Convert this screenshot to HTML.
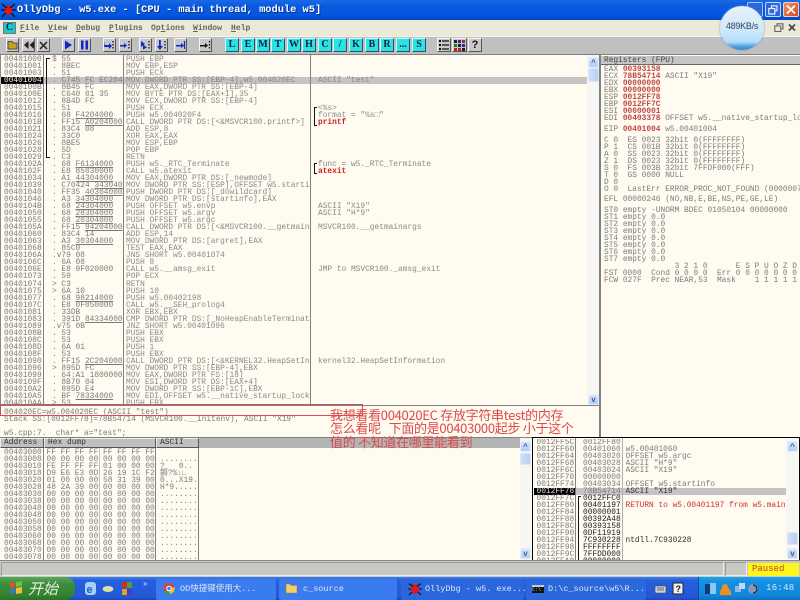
<!DOCTYPE html>
<html><head><meta charset="utf-8"><style>
*{margin:0;padding:0;box-sizing:border-box}
html,body{width:800px;height:600px;overflow:hidden;background:#fffbf0}
#w{position:absolute;left:0;top:0;width:800px;height:600px;overflow:hidden;filter:blur(.35px)}
.a{position:absolute}
pre{position:absolute;font-family:"Liberation Mono","Noto Sans CJK SC",monospace;font-size:7.85px;line-height:7.03px;color:#7c7c7c;white-space:pre;overflow-x:clip;overflow-y:visible}
.d{color:#8a8a8a}
.k{color:#555}
.r{color:#d03030}
.rb{color:#d02020;font-weight:bold}
.v{color:#c04848;font-weight:bold}
u{text-decoration:underline}
.tb{position:absolute;top:38px;height:14px;background:#c8c8c8;border:1px solid;border-color:#f4f4f4 #555 #555 #f4f4f4}
.cy{position:absolute;top:38px;width:14px;height:14px;background:#28e4e4;border:1px solid;border-color:#c8ffff #446 #446 #c8ffff;font:bold 10px/12px "Liberation Serif",serif;text-align:center;color:#124}
.sc{position:absolute;width:11px;height:11px;background:linear-gradient(#d8e6fa,#b4cdf2);border:1px solid #e4eefc;border-radius:2px;color:#3a5fa8;font:bold 8px/9px "Liberation Sans",sans-serif;text-align:center}
.th{position:absolute;width:11px;background:linear-gradient(90deg,#cfdff8,#b8d0f4);border:1px solid #dbe6f8;border-radius:2px}
.vl{position:absolute;width:1px;background:#808080}
.hd{position:absolute;top:438px;height:10px;background:#c0c0c0;border:1px solid;border-color:#eee #555 #555 #eee;font:7.85px/8px "Liberation Mono",monospace;color:#333;padding-left:3px;letter-spacing:.05px}
.m{position:absolute;top:24px;font:bold 8px/10px "Liberation Mono",monospace;color:#66665c;letter-spacing:.02px}
.tk{position:absolute;top:579px;height:21px;border-radius:2px;background:#3a7cf0;color:#dce6f4;font:8.5px/20px "Liberation Mono","Noto Sans CJK SC",monospace;padding-left:24px;white-space:pre}
</style></head><body><div id="w">

<!-- title bar -->
<div class="a" style="left:0;top:0;width:800px;height:20px;background:linear-gradient(#1c6ae4 0,#0a5ae0 30%,#0458e0 70%,#0348c4 100%)"></div>
<svg class="a" style="left:1px;top:2px" width="15" height="16" viewBox="0 0 15 16"><ellipse cx="7.5" cy="8" rx="4" ry="5" fill="#e01818"/><path d="M1 2l5 4M14 2l-5 4M0 8h4M15 8h-4M1 15l4-4M14 15l-4-4" stroke="#101010" stroke-width="1.2"/></svg>
<div class="a" style="left:17px;top:3px;font:bold 10.35px/14px 'Liberation Mono',monospace;color:#fff;white-space:pre;text-shadow:1px 1px 0 #03328f">OllyDbg - w5.exe - [CPU - main thread, module w5]</div>
<div class="a" style="left:747px;top:2px;width:16px;height:15px;background:#2a66dc;border:1px solid #a8c4f4;border-radius:2px"></div>
<div class="a" style="left:765px;top:2px;width:16px;height:15px;background:#2a66dc;border:1px solid #c4d8f8;border-radius:2px"></div>
<svg class="a" style="left:768px;top:5px" width="10" height="10"><path d="M3.5 3V.8h5.5v5H7M.8 3.5h6v5.5h-6z" fill="none" stroke="#e8f0ff" stroke-width="1.2"/></svg>
<div class="a" style="left:783px;top:2px;width:16px;height:15px;background:linear-gradient(135deg,#f09070,#d84818);border:1px solid #f0d0c0;border-radius:2px"></div>
<svg class="a" style="left:786px;top:5px" width="10" height="9"><path d="M1 .5l8 8M9 .5l-8 8" stroke="#fff" stroke-width="1.8"/></svg>

<!-- menu bar -->
<div class="a" style="left:0;top:20px;width:800px;height:16px;background:#ece9d8"></div>
<div class="a" style="left:3px;top:22px;width:13px;height:12px;background:#1cc8c8;border:1px solid #777;font:bold 10px/10px 'Liberation Serif',serif;text-align:center;color:#124">C</div>
<div class="m" style="left:20px"><u>F</u>ile</div>
<div class="m" style="left:48px"><u>V</u>iew</div>
<div class="m" style="left:76px"><u>D</u>ebug</div>
<div class="m" style="left:109px"><u>P</u>lugins</div>
<div class="m" style="left:151px">Op<u>t</u>ions</div>
<div class="m" style="left:193px"><u>W</u>indow</div>
<div class="m" style="left:231px"><u>H</u>elp</div>
<svg class="a" style="left:774px;top:23px" width="24" height="10"><path d="M3 2.5V.8h6v5H7.5M.8 3h6v5.5h-6z" fill="none" stroke="#666" stroke-width="1.1"/><path d="M15 1.5l6 6M21 1.5l-6 6" stroke="#444" stroke-width="1.6"/></svg>

<!-- toolbar -->
<div class="a" style="left:0;top:36px;width:800px;height:19px;background:#c0c0c0;border-top:1px solid #f2f2f2;border-bottom:1px solid #808080"></div>
<div class="tb" style="left:6px;width:13px"></div>
<svg class="a" style="left:7px;top:40px" width="12" height="10"><path d="M1 1.5h4l1 1.500h4v6H1z" fill="#c8a020" stroke="#333" stroke-width=".8"/></svg>
<div class="tb" style="left:22px;width:13px"></div>
<svg class="a" style="left:23px;top:40px" width="12" height="10"><path d="M5.5 1L1 5l4.500 4zM11 1L6.500 5 11 9z" fill="#222"/></svg>
<div class="tb" style="left:37px;width:13px"></div>
<svg class="a" style="left:39px;top:41px" width="9" height="9"><path d="M1 1l7 7M8 1l-7 7" stroke="#222" stroke-width="1.500"/></svg>
<div class="tb" style="left:62px;width:13px"></div>
<svg class="a" style="left:64px;top:40px" width="9" height="10"><path d="M1 .5L8 5 1 9.500z" fill="#1028c8"/></svg>
<div class="tb" style="left:78px;width:13px"></div>
<svg class="a" style="left:80px;top:40px" width="9" height="10"><path d="M1 .5h2.500v9H1zM5.500 .5H8v9H5.500z" fill="#1028c8"/></svg>
<div class="tb" style="left:103px;width:13px"></div>
<svg class="a" style="left:104px;top:40px" width="11" height="10"><path d="M1 1v4h4V3l3 3-3 3V7H0" fill="#1028c8"/><path d="M9 1v1.500M9 4v1.500M9 7v1.500" stroke="#111" stroke-width="1.300"/></svg>
<div class="tb" style="left:119px;width:13px"></div>
<svg class="a" style="left:120px;top:40px" width="11" height="10"><path d="M0 5h4V3l3 2.500L4 8V6.500H0z" fill="#1028c8"/><path d="M9 1v1.500M9 4v1.500M9 7v1.500" stroke="#111" stroke-width="1.300"/></svg>
<div class="tb" style="left:139px;width:13px"></div>
<svg class="a" style="left:140px;top:40px" width="11" height="10"><path d="M1 1l4 3-4 3zM3 4.500l4 3-4 2z" fill="#1028c8"/><path d="M9 1v1.500M9 4v1.500M9 7v1.500" stroke="#111" stroke-width="1.300"/></svg>
<div class="tb" style="left:155px;width:13px"></div>
<svg class="a" style="left:156px;top:40px" width="11" height="10"><path d="M3 0h1.800v6H7L3.900 10 1 6h2z" fill="#1028c8"/><path d="M9 1v1.500M9 4v1.500M9 7v1.500" stroke="#111" stroke-width="1.300"/></svg>
<div class="tb" style="left:174px;width:13px"></div>
<svg class="a" style="left:175px;top:40px" width="11" height="10"><path d="M1 5h5V3l3 2.500L6 8V6.500H1z" fill="#1028c8"/><path d="M9.500 1v8" stroke="#1028c8" stroke-width="1.300"/></svg>
<div class="tb" style="left:199px;width:13px"></div>
<svg class="a" style="left:200px;top:40px" width="11" height="10"><path d="M0 5h5V3l3 2.500L5 8V6.500H0z" fill="#111"/><path d="M9.500 1v1.500M9.500 4v1.500M9.500 7v1.500" stroke="#111" stroke-width="1.300"/></svg>

<div class="cy" style="left:225px">L</div><div class="cy" style="left:241px">E</div><div class="cy" style="left:256px">M</div><div class="cy" style="left:271px">T</div><div class="cy" style="left:287px">W</div><div class="cy" style="left:302px">H</div><div class="cy" style="left:318px">C</div><div class="cy" style="left:333px">/</div><div class="cy" style="left:349px">K</div><div class="cy" style="left:365px">B</div><div class="cy" style="left:380px">R</div><div class="cy" style="left:396px">...</div><div class="cy" style="left:412px">S</div>
<div class="tb" style="left:437px;width:14px"></div>
<svg class="a" style="left:438px;top:39px" width="12" height="12"><path d="M1 2h2M1 6h2M1 10h2" stroke="#111" stroke-width="2"/><path d="M4 2h7M4 6h7M4 10h7" stroke="#111" stroke-width="1.200"/></svg>
<div class="tb" style="left:452px;width:15px"></div>
<svg class="a" style="left:454px;top:40px" width="11" height="11"><rect width="3" height="3" fill="#222"/><rect x="4" width="3" height="3" fill="#2828c0"/><rect x="8" width="3" height="3" fill="#c02020"/><rect y="4" width="3" height="3" fill="#208020"/><rect x="4" y="4" width="3" height="3" fill="#222"/><rect x="8" y="4" width="3" height="3" fill="#2828c0"/><rect y="8" width="3" height="3" fill="#c02020"/><rect x="4" y="8" width="3" height="3" fill="#c02020"/><rect x="8" y="8" width="3" height="3" fill="#222"/></svg>
<div class="tb" style="left:468px;width:14px;font:bold 11px/12px 'Liberation Sans',sans-serif;text-align:center;color:#111">?</div>

<!-- speed bubble -->
<div class="a" style="left:720px;top:6px;width:44px;height:44px;border-radius:50%;background:linear-gradient(#e4f2fc 0,#d0e8fa 55%,#b0dcfa 82%,#4aa0e0 92%,#2f8ad4 100%);box-shadow:0 0 2px #6a9ac8;font:9px/40px 'Liberation Sans',sans-serif;text-align:center;color:#33465e;letter-spacing:-.25px">489KB/s</div>

<!-- disasm panel -->
<div class="a" style="left:0;top:55px;width:587px;height:350px;background:#fffbf0;overflow:hidden;border-left:1px solid #888"></div>
<div class="a" style="left:0;top:77px;width:587px;height:7px;background:#c4c4c4"></div>
<div class="a" style="left:1px;top:77px;width:42px;height:7px;background:#000"></div>
<div class="vl" style="left:43px;top:55px;height:350px"></div>
<div class="vl" style="left:123px;top:55px;height:350px"></div>
<div class="vl" style="left:310px;top:55px;height:350px"></div>
<pre style="left:4px;top:55.500px;width:39px;height:350px">00401000
00401001
00401003
<span style="color:#eee">00401004</span>
0040100B
0040100E
00401012
00401015
00401016
0040101B
00401021
00401024
00401026
00401028
00401029
0040102A
0040102F
00401034
00401039
00401040
00401046
0040104B
00401050
00401055
0040105A
00401060
00401063
00401068
0040106A
0040106C
0040106E
00401073
00401074
00401075
00401077
0040107C
00401081
00401083
00401089
0040108B
0040108C
0040108D
0040108F
00401090
00401096
00401099
0040109F
004010A2
004010A5
004010AA</pre>
<pre style="left:52px;top:55.500px;width:71px;height:350px">$ 55
. 8BEC
. 51
. C745 FC EC204000
. 8B45 FC
. C640 01 35
. 8B4D FC
. 51
. 68 <u>F4204000</u>
. FF15 <u>A0204000</u>
. 83C4 08
. 33C0
. 8BE5
. 5D
. C3
. 68 <u>F6134000</u>
. E8 85030000
. A1 <u>44304000</u>
. C70424 <u>34304000</u>
. FF35 <u>40304000</u>
. A3 <u>34304000</u>
. 68 <u>24304000</u>
. 68 <u>28304000</u>
. 68 <u>20304000</u>
. FF15 <u>94204000</u>
. 83C4 14
. A3 <u>30304000</u>
. 85C0
.v79 08
. 6A 08
. E8 9F020000
. 59
&gt; C3
&gt; 6A 10
. 68 <u>98214000</u>
. E8 0F050000
. 33DB
. 391D <u>84334000</u>
.v75 0B
. 53
. 53
. 6A 01
. 53
. FF15 <u>2C204000</u>
&gt; 895D FC
. 64:A1 18000000
. 8B70 04
. 895D E4
. BF <u>78334000</u>
&gt; 53</pre>
<div class="a" style="left:46px;top:58px;width:4px;height:100px;border:1.500px solid #111;border-right:0;border-bottom-width:1px"></div>
<pre class="d" style="left:126px;top:55.500px;width:184px;height:350px">PUSH EBP
MOV EBP,ESP
PUSH ECX
MOV DWORD PTR SS:[EBP-4],w5.004020EC
MOV EAX,DWORD PTR SS:[EBP-4]
MOV BYTE PTR DS:[EAX+1],35
MOV ECX,DWORD PTR SS:[EBP-4]
PUSH ECX
PUSH w5.004020F4
CALL DWORD PTR DS:[&lt;&amp;MSVCR100.printf&gt;]
ADD ESP,8
XOR EAX,EAX
MOV ESP,EBP
POP EBP
RETN
PUSH w5._RTC_Terminate
CALL w5.atexit
MOV EAX,DWORD PTR DS:[_newmode]
MOV DWORD PTR SS:[ESP],OFFSET w5.startinfo
PUSH DWORD PTR DS:[_dowildcard]
MOV DWORD PTR DS:[startinfo],EAX
PUSH OFFSET w5.envp
PUSH OFFSET w5.argv
PUSH OFFSET w5.argc
CALL DWORD PTR DS:[&lt;&amp;MSVCR100.__getmainargs&gt;]
ADD ESP,14
MOV DWORD PTR DS:[argret],EAX
TEST EAX,EAX
JNS SHORT w5.00401074
PUSH 8
CALL w5.__amsg_exit
POP ECX
RETN
PUSH 10
PUSH w5.00402198
CALL w5.__SEH_prolog4
XOR EBX,EBX
CMP DWORD PTR DS:[_NoHeapEnableTerminationOnCorruption],EBX
JNZ SHORT w5.00401096
PUSH EBX
PUSH EBX
PUSH 1
PUSH EBX
CALL DWORD PTR DS:[&lt;&amp;KERNEL32.HeapSetInformation&gt;]
MOV DWORD PTR SS:[EBP-4],EBX
MOV EAX,DWORD PTR FS:[18]
MOV ESI,DWORD PTR DS:[EAX+4]
MOV DWORD PTR SS:[EBP-1C],EBX
MOV EDI,OFFSET w5.__native_startup_lock
PUSH EBX</pre>
<pre class="d" style="left:318px;top:55.500px;width:268px;height:350px">



ASCII "test"



&lt;%s&gt;
format = "%s□"
<span class="rb">printf</span>





func = w5._RTC_Terminate
<span class="rb">atexit</span>




ASCII "X19"
ASCII "H*9"

MSVCR100.__getmainargs





JMP to MSVCR100._amsg_exit












kernel32.HeapSetInformation</pre>
<div class="a" style="left:314px;top:107px;width:3px;height:19px;border:1px solid #111;border-right:0"></div>
<div class="a" style="left:314px;top:163px;width:3px;height:11px;border:1px solid #111;border-right:0"></div>
<!-- disasm scrollbar -->
<div class="a" style="left:587px;top:55px;width:12px;height:350px;background:#f6f6f2"></div>
<div class="sc" style="left:588px;top:57px">^</div>
<div class="th" style="left:588px;top:68px;height:14px"></div>
<div class="sc" style="left:588px;top:394px">v</div>
<div class="vl" style="left:599px;top:55px;width:2px;height:383px"></div>

<!-- registers -->
<pre style="left:604px;top:66.200px;width:196px;height:60px">EAX <span class="v">00393158</span>
ECX <span class="v">78B54714</span> ASCII "X19"
EDX <span class="v">00000000</span>
EBX <span class="v">00000000</span>
ESP <span class="v">0012FF78</span>
EBP <span class="v">0012FF7C</span>
ESI <span class="v">00000001</span>
EDI <span class="v">00403378</span> OFFSET w5.__native_startup_lock</pre>
<div class="a" style="left:601px;top:56px;width:199px;height:9px;background:#c6c6c6;border-bottom:1px solid #666"></div>
<pre style="left:604px;top:57px;width:190px;height:9px;color:#444">Registers (FPU)</pre>
<pre style="left:604px;top:125.500px;width:196px;height:9px">EIP <span class="v">00401004</span> w5.00401004</pre>
<pre style="left:604px;top:136.500px;width:196px;height:66px">C 0  ES 0023 32bit 0(FFFFFFFF)
P 1  CS 001B 32bit 0(FFFFFFFF)
A 0  SS 0023 32bit 0(FFFFFFFF)
Z 1  DS 0023 32bit 0(FFFFFFFF)
S 0  FS 003B 32bit 7FFDF000(FFF)
T 0  GS 0000 NULL
D 0
O 0  LastErr ERROR_PROC_NOT_FOUND (0000007F)</pre>
<pre style="left:604px;top:195.500px;width:196px;height:9px">EFL 00000246 (NO,NB,E,BE,NS,PE,GE,LE)</pre>
<pre style="left:604px;top:207px;width:196px;height:85px">ST0 empty -UNORM BDEC 01050104 00000000
ST1 empty 0.0
ST2 empty 0.0
ST3 empty 0.0
ST4 empty 0.0
ST5 empty 0.0
ST6 empty 0.0
ST7 empty 0.0
               3 2 1 0      E S P U O Z D I
FST 0000  Cond 0 0 0 0  Err 0 0 0 0 0 0 0 0
FCW 027F  Prec NEAR,53  Mask    1 1 1 1 1 1</pre>

<!-- info panel -->
<div class="a" style="left:0;top:405px;width:599px;height:1px;background:#808080"></div>
<pre style="left:4px;top:408.500px;width:320px;height:30px">004020EC=w5.004020EC (ASCII "test")
Stack SS:[0012FF78]=78B54714 (MSVCR100.__initenv), ASCII "X19"

w5.cpp:7.  char* a="test";</pre>

<!-- dump -->
<div class="a" style="left:0;top:437px;width:532px;height:1px;background:#808080"></div>
<div class="a" style="left:198px;top:438px;width:322px;height:10px;background:#b4b4b4"></div>
<div class="hd" style="left:0;width:44px">Address</div>
<div class="hd" style="left:44px;width:112px">Hex dump</div>
<div class="hd" style="left:156px;width:43px">ASCII</div>
<div class="vl" style="left:43px;top:448px;height:112px"></div>
<div class="vl" style="left:99px;top:448px;height:112px;background:#c0c0c0"></div>
<div class="vl" style="left:155px;top:448px;height:112px"></div>
<div class="vl" style="left:198px;top:448px;height:112px"></div>
<pre style="left:4px;top:449px;width:39px;height:111px">00403000
00403008
00403010
00403018
00403020
00403028
00403030
00403038
00403040
00403048
00403050
00403058
00403060
00403068
00403070
00403078</pre>
<pre style="left:46.500px;top:449px;width:108px;height:111px">FF FF FF FF FF FF FF FF
00 00 00 00 00 00 00 00
FE FF FF FF 01 00 00 00
D9 E6 E3 0D 26 19 1C F2
01 00 00 00 58 31 39 00
48 2A 39 00 00 00 00 00
00 00 00 00 00 00 00 00
00 00 00 00 00 00 00 00
00 00 00 00 00 00 00 00
00 00 00 00 00 00 00 00
00 00 00 00 00 00 00 00
00 00 00 00 00 00 00 00
00 00 00 00 00 00 00 00
00 00 00 00 00 00 00 00
00 00 00 00 00 00 00 00
00 00 00 00 00 00 00 00</pre>
<pre style="left:160px;top:449px;width:38px;height:111px">

........
?   0..
鎒?%↓∟
0...X19.
H*9.....
........
........
........
........
........
........
........
........
........
........</pre>
<div class="a" style="left:520px;top:438px;width:12px;height:122px;background:#f6f6f2"></div>
<div class="sc" style="left:520px;top:441px">^</div>
<div class="th" style="left:520px;top:453px;height:12px"></div>
<div class="sc" style="left:520px;top:548px">v</div>

<!-- stack panel -->
<div class="a" style="left:532px;top:437px;width:268px;height:124px;background:#fffbf0;border:1px solid #000;border-width:1.500px"></div>
<div class="a" style="left:534px;top:488px;width:252px;height:7px;background:#c4c4c4"></div>
<div class="a" style="left:534px;top:488px;width:41px;height:7px;background:#000"></div>
<div class="vl" style="left:575px;top:438px;height:122px"></div>
<div class="vl" style="left:622px;top:438px;height:122px;background:#b0b0b0"></div>
<pre style="left:536.500px;top:438.500px;width:39px;height:121px;overflow:hidden">0012FF5C
0012FF60
0012FF64
0012FF68
0012FF6C
0012FF70
0012FF74
<span style="color:#ddd">0012FF78</span>
0012FF7C
0012FF80
0012FF84
0012FF88
0012FF8C
0012FF90
0012FF94
0012FF98
0012FF9C
0012FFA0</pre>
<pre style="left:583px;top:438.500px;width:39px;height:121px;overflow:hidden">0012FF80
00401060
00403020
00403028
00403024
00000000
00403034
78B54714
<span class="k" style="color:#222">0012FFC0
00401197
00000001
00392A48
00393158
0DF11919
7C930228
FFFFFFFF
7FFDD000
00000000</span></pre>
<div class="a" style="left:578px;top:496px;width:3px;height:64px;border:1px solid #111;border-right:0;border-bottom:0"></div>
<pre style="left:625.500px;top:438.500px;width:160px;height:121px;overflow:hidden">

w5.00401060
OFFSET w5.argc
ASCII "H*9"
ASCII "X19"

OFFSET w5.startinfo
<span style="color:#333">ASCII "X19"</span>

<span class="r">RETURN to w5.00401197 from w5.main</span>




<span style="color:#333">ntdll.7C930228</span></pre>
<div class="a" style="left:786px;top:439px;width:12px;height:120px;background:#f6f6f2"></div>
<div class="sc" style="left:787px;top:441px">^</div>
<div class="th" style="left:787px;top:532px;height:13px"></div>
<div class="sc" style="left:787px;top:548px">v</div>

<!-- red annotation -->
<div class="a" style="left:0;top:404px;width:363px;height:12px;border:1px solid #d05050"></div>
<div class="a" style="left:330px;top:408px;font:13px/13.300px 'Noto Sans CJK SC','Liberation Sans',sans-serif;color:#dc4a4a;white-space:pre;letter-spacing:-.3px">我想看看004020EC 存放字符串test的内存
怎么看呢   下面的是00403000起步 小于这个
值的 不知道在哪里能看到</div>

<!-- status bar -->
<div class="a" style="left:0;top:560px;width:800px;height:17px;background:#c8c8c4;border-top:1px solid #888"></div>
<div class="a" style="left:1px;top:562px;width:723px;height:14px;border:1px solid;border-color:#999 #eee #eee #999"></div>
<div class="a" style="left:725px;top:562px;width:22px;height:14px;border:1px solid;border-color:#999 #eee #eee #999"></div>
<div class="a" style="left:748px;top:563px;width:51px;height:13px;background:#fff420;font:9px/13px 'Liberation Mono',monospace;color:#b84a18;padding-left:4px">Paused</div>

<!-- taskbar -->
<div class="a" style="left:0;top:577px;width:800px;height:23px;background:linear-gradient(#3a80f0 0,#2460dc 15%,#2458d8 85%,#1c48b8 100%)"></div>
<div class="a" style="left:0;top:577px;width:75px;height:23px;background:linear-gradient(#58a858 0,#3c8c3c 30%,#348434 75%,#2c702c 100%);border-radius:0 10px 10px 0"></div>
<svg class="a" style="left:8px;top:580px" width="16" height="16"><path d="M2 3l5-1v5l-5 1z" fill="#e05030"/><path d="M8 2l6-1v5l-6 1z" fill="#70c040"/><path d="M2 9l5-1v6l-5-1z" fill="#4070e0"/><path d="M8 8l6-1v6l-6 1z" fill="#f0c030"/></svg>
<div class="a" style="left:28px;top:579px;font:italic 15px/20px 'Noto Sans CJK SC',sans-serif;color:#e8f0e0">开始</div>
<svg class="a" style="left:84px;top:582px" width="60" height="14"><rect x="1" y="0" width="11" height="13" rx="3" fill="#a8d0f4"/><text x="2.500" y="11" font-family="Liberation Sans" font-size="11" font-weight="bold" fill="#1860c8">e</text><ellipse cx="24" cy="7" rx="5.500" ry="3" fill="#d8e0a8"/><rect x="38" y="0" width="5" height="6" fill="#d03020"/><rect x="43" y="0" width="5" height="6" fill="#50a040"/><rect x="38" y="7" width="5" height="6" fill="#e0a020"/><rect x="43" y="7" width="5" height="6" fill="#4040c0"/></svg>
<div class="a" style="left:143px;top:579px;font:bold 8px/10px 'Liberation Sans',sans-serif;color:#a8c8f8">»</div>

<div class="tk" style="left:156px;width:120px">OD快捷键使用大...</div>
<svg class="a" style="left:163px;top:582px" width="12" height="13"><circle cx="6" cy="6.500" r="5.500" fill="#e04030"/><path d="M6 6.500L1.200 9.500A5.500 5.500 0 0 0 7 12z" fill="#40a050"/><path d="M6 6.500L7 12A5.500 5.500 0 0 0 11.500 5z" fill="#f0c030"/><circle cx="6" cy="6.500" r="2.300" fill="#4080e0" stroke="#fff"/></svg>
<div class="tk" style="left:279px;width:118px">c_source</div>
<svg class="a" style="left:285px;top:583px" width="13" height="11"><path d="M1 1h4l1 1.500h6V10H1z" fill="#f0d070" stroke="#a08030" stroke-width=".6"/></svg>
<div class="tk" style="left:401px;width:123px;background:#2c66dc;padding-left:24px">OllyDbg - w5. exe...</div>
<svg class="a" style="left:408px;top:582px" width="14" height="14"><ellipse cx="7" cy="7" rx="4" ry="5" fill="#e01818"/><path d="M1 1.500l4 3M13 1.500l-4 3M0 7h3M14 7h-3M1 13l3-3M13 13l-3-3" stroke="#101010" stroke-width="1.100"/></svg>
<div class="tk" style="left:526px;width:120px;padding-left:22px;background:#2a68dc">D:\c_source\w5\R...</div>
<div class="a" style="left:532px;top:585px;width:12px;height:8px;background:#111;border-top:2px solid #c8c8d8;font:5px/6px 'Liberation Mono',monospace;color:#ddd">C:\</div>
<svg class="a" style="left:654px;top:582px" width="30" height="14"><rect x="1" y="4" width="11" height="7" rx="1" fill="#d0d4d8" stroke="#444" stroke-width=".6"/><path d="M3 6h7M3 8h7" stroke="#445" stroke-width=".8"/><rect x="19" y="1" width="10" height="11" fill="#f0f0f0" stroke="#222"/><text x="21.500" y="10" font-family="Liberation Sans" font-size="9" font-weight="bold" fill="#222">?</text></svg>
<div class="a" style="left:698px;top:577px;width:102px;height:23px;background:linear-gradient(#1ca4ee 0,#1490e4 20%,#1088dc 80%,#0c70c4 100%);border-left:1px solid #0a50a0"></div>
<svg class="a" style="left:705px;top:582px" width="56" height="14"><rect x="0" y="2" width="6" height="10" fill="#123a78"/><rect x="5" y="1" width="6" height="11" fill="#88c8f0"/><path d="M20 2a3 3 0 0 1 3 3l3 5v3h-11v-3l2-5a3 3 0 0 1 3-3z" fill="#e89020"/><rect x="30" y="4" width="6" height="6" fill="#90b8e8"/><rect x="34" y="1" width="6" height="6" fill="#c0d8f4"/><circle cx="48" cy="7" r="5" fill="#8a98b8"/><path d="M48 3a4 4 0 0 1 0 8" fill="none" stroke="#223" stroke-width="1.200"/></svg>
<div class="a" style="left:766px;top:581px;font:9px/15px 'Liberation Mono',monospace;color:#d4e8fa;letter-spacing:.3px">16:48</div>

</div></body></html>
